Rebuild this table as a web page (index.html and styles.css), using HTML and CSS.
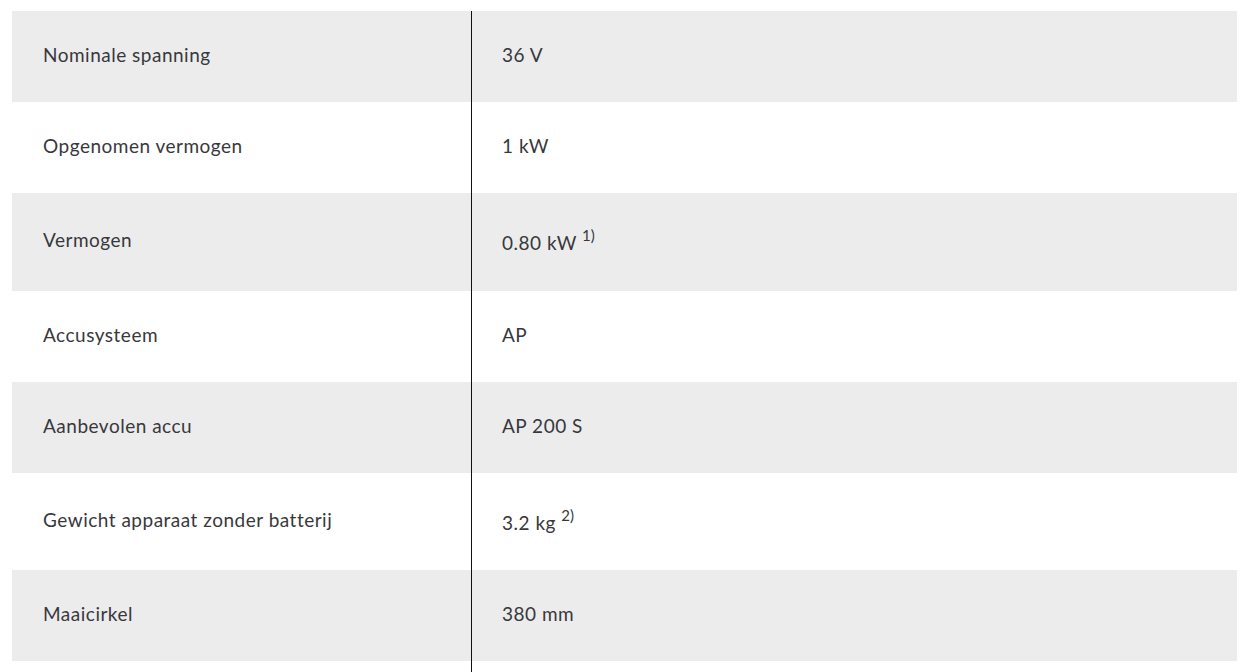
FILE: index.html
```html
<!DOCTYPE html>
<html lang="nl">
<head>
<meta charset="utf-8">
<link rel="stylesheet" href="styles.css">
</head>
<body>
<table class="specs">
  <tbody>
    <tr class="row-alt"><td class="label">Nominale spanning</td><td class="value">36 V</td></tr>
    <tr><td class="label">Opgenomen vermogen</td><td class="value">1 kW</td></tr>
    <tr class="row-alt"><td class="label">Vermogen</td><td class="value">0.80 kW <sup>1)</sup></td></tr>
    <tr><td class="label">Accusysteem</td><td class="value">AP</td></tr>
    <tr class="row-alt"><td class="label">Aanbevolen accu</td><td class="value">AP 200 S</td></tr>
    <tr><td class="label">Gewicht apparaat zonder batterij</td><td class="value">3.2 kg <sup>2)</sup></td></tr>
    <tr class="row-alt"><td class="label">Maaicirkel</td><td class="value">380 mm</td></tr>
    <tr class="row-empty"><td class="label"></td><td class="value"></td></tr>
  </tbody>
</table>
</body>
</html>
```
FILE: styles.css
```css
html, body {
  margin: 0;
  padding: 0;
  background: #fff;
}
body {
  padding: 11px 9px 0 12px;
  overflow: hidden;
  height: 672px;
  box-sizing: border-box;
}
.specs {
  width: 1225px;
  border-collapse: collapse;
  font-family: "Lato", "Noto Sans", sans-serif;
  font-size: 19px;
  letter-spacing: 0.5px;
  color: #38383c;
}
.specs td {
  padding: 30.1px 30px 34.1px 31px;
  line-height: 27px;
  vertical-align: middle;
}
.specs .label {
  width: 398px;
  border-right: 1px solid #111;
}
.specs .value {
  padding-left: 30px;
}
.row-alt {
  background: #ececec;
}
.row-empty td {
  height: 27px;
}
.specs sup {
  font-size: 15px;
  line-height: 24px;
  vertical-align: 9px;
  letter-spacing: 0;
}
```
